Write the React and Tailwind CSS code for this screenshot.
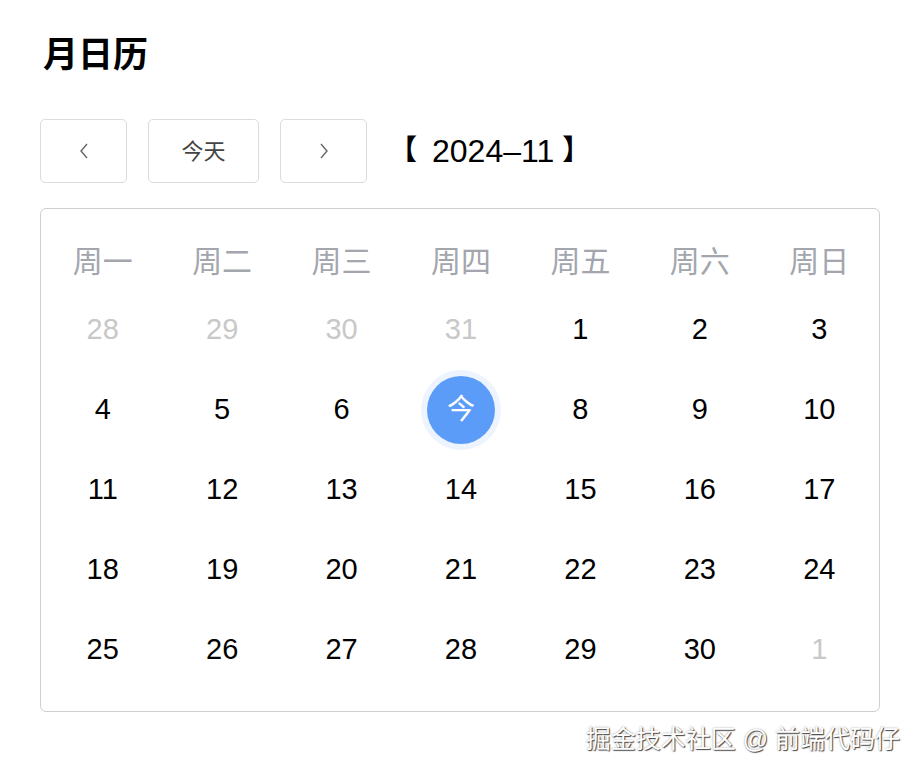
import React from 'react';

const weekdays = ['周一', '周二', '周三', '周四', '周五', '周六', '周日'];

// 2024-11: starts on Friday, prev-month padding 28..31, next-month 1
function buildDays() {
  const days = [];
  [28, 29, 30, 31].forEach((d) => days.push({ d, muted: true }));
  for (let d = 1; d <= 30; d++) days.push({ d, muted: false, today: d === 7 });
  days.push({ d: 1, muted: true });
  return days;
}

function Chevron({ dir }) {
  return (
    <svg width="12" height="20" viewBox="0 0 12 20" fill="none" stroke="#666" strokeWidth="1.4">
      {dir === 'left' ? <path d="M9 3 L3 10 L9 17" /> : <path d="M3 3 L9 10 L3 17" />}
    </svg>
  );
}

export default function App() {
  const days = buildDays();
  const font = { fontFamily: '"Liberation Sans", "Noto Sans CJK SC", sans-serif' };

  return (
    <div className="w-[922px] h-[780px] bg-white relative" style={font}>
      <div className="pl-[40px] pr-[42px] pt-[30px]">
        <h1 className="text-[35px] font-bold text-black leading-[50px] pl-[3px]">月日历</h1>

        <div className="flex items-center mt-[39px] h-[64px]">
          <button className="w-[87px] h-[64px] border border-[#dcdcdc] rounded-[5px] flex items-center justify-center">
            <Chevron dir="left" />
          </button>
          <button className="ml-[21px] w-[111px] h-[64px] border border-[#dcdcdc] rounded-[5px] text-[22px] text-[#444] flex items-center justify-center">
            今天
          </button>
          <button className="ml-[21px] w-[87px] h-[64px] border border-[#dcdcdc] rounded-[5px] flex items-center justify-center">
            <Chevron dir="right" />
          </button>
          <div className="ml-[22px] text-[32px] text-black flex items-center">
            <span className="font-bold text-[28px]">【</span>
            <span className="ml-[15px]">2024–11</span>
            <span className="font-bold text-[28px] ml-[8px]">】</span>
          </div>
        </div>

        <div className="mt-[25px] border border-[#cfcfcf] rounded-[6px] pl-[2px] pt-[23px] pb-[21px]">
          <div className="grid grid-cols-7 h-[58px] items-center">
            {weekdays.map((w) => (
              <div key={w} className="text-center text-[30px] text-[#a3a6ad]">{w}</div>
            ))}
          </div>
          <div className="grid grid-cols-7">
            {days.map((day, i) => (
              <div key={i} className="h-[80px] flex items-center justify-center">
                {day.today ? (
                  <div className="w-[68px] h-[68px] rounded-full bg-[#5b9cf8] ring-[6px] ring-[#edf4fe] flex items-center justify-center text-white text-[28px]">
                    今
                  </div>
                ) : (
                  <span className={`text-[29px] ${day.muted ? 'text-[#c8c8c8]' : 'text-black'}`}>{day.d}</span>
                )}
              </div>
            ))}
          </div>
        </div>
      </div>

      <div className="absolute right-[22px] bottom-[22px] text-[25px] text-white [text-shadow:1px_1px_1px_rgba(0,0,0,0.7),0_0_2px_rgba(0,0,0,0.4)]">
        掘金技术社区 @ 前端代码仔
      </div>
    </div>
  );
}
